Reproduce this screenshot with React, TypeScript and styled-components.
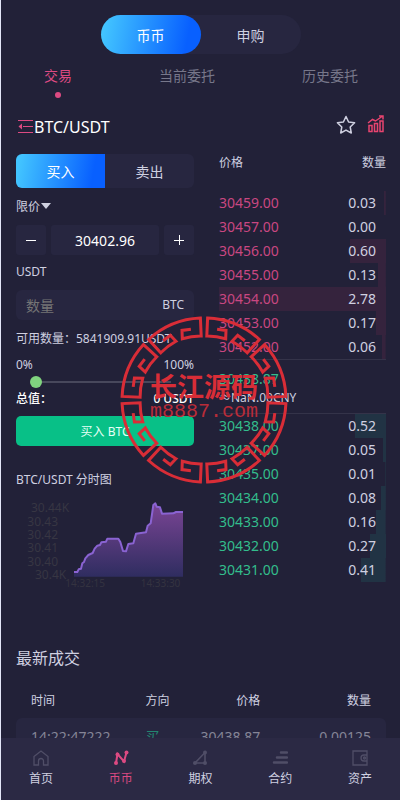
import React, { useState } from "react";
import styled, { createGlobalStyle, css } from "styled-components";

const GlobalStyle = createGlobalStyle`
  * { box-sizing: border-box; }
  body { margin: 0; background: #222138; }
  body, button, input {
    font-family: "Noto Sans", "Noto Sans CJK SC", sans-serif;
  }
  button { border: 0; padding: 0; background: none; color: inherit; cursor: pointer; }
`;

const blue = "linear-gradient(100deg, #42c4ff 5%, #0860ff 85%)";
const pink = "#dc4a82";
const green = "#33bd8c";
const panel = "#272640";
const text = "#cfd0e0";

const Page = styled.div`
  position: relative;
  display: flex;
  flex-direction: column;
  height: 100vh;
  border-left: 1px solid #e4e6f8;
  color: ${text};
  font-size: 12px;
  line-height: 18px;
`;

const Main = styled.main`
  flex: 1;
  min-height: 0;
  overflow-y: auto;
  scrollbar-width: none;
`;

const ModeSwitch = styled.div`
  display: flex;
  width: 200px;
  height: 39px;
  margin: 15px auto 0;
  border-radius: 20px;
  background: ${panel};
`;

const ModeButton = styled.button<{ $active?: boolean }>`
  flex: 1;
  border-radius: 20px;
  font-size: 14px;
  ${(p) => p.$active && css`background: ${blue}; color: #fff;`}
`;

const Tabs = styled.nav`
  display: flex;
  justify-content: space-between;
  padding: 11px 42px 0 43px;
`;

const Tab = styled.button<{ $active?: boolean }>`
  display: flex;
  flex-direction: column;
  align-items: center;
  gap: 5px;
  height: 34px;
  font-size: 14px;
  line-height: 22px;
  color: ${(p) => (p.$active ? pink : "#77778a")};
  &::after {
    content: "";
    width: 6px;
    height: 6px;
    border-radius: 50%;
    background: ${(p) => (p.$active ? pink : "transparent")};
  }
`;

const PairBar = styled.header`
  display: flex;
  align-items: center;
  height: 28px;
  margin-top: 14px;
  padding: 0 15px 0 16px;
`;

const PairName = styled.h1`
  flex: 1;
  margin: 0;
  font-size: 16px;
  font-weight: 400;
  line-height: 24px;
  color: #fff;
`;

const PairActions = styled.div`
  display: flex;
  gap: 11px;
  margin-bottom: 4px;
`;

const IconButton = styled.button`
  display: flex;
`;

const Columns = styled.div`
  display: grid;
  grid-template-columns: 178fr 167fr;
  column-gap: 25px;
  padding: 13px 14px 0 15px;
`;

const Form = styled.form`
  display: flex;
  flex-direction: column;
  min-width: 0;
`;

const SideSwitch = styled.div`
  display: flex;
  height: 34px;
  border-radius: 6px;
  overflow: hidden;
  background: ${panel};
`;

const SideButton = styled.button<{ $active?: boolean }>`
  flex: 1;
  font-size: 14px;
  ${(p) => p.$active && css`background: ${blue}; color: #fff;`}
`;

const OrderType = styled.button`
  display: flex;
  align-items: center;
  gap: 1px;
  height: 18px;
  margin: 9px 0 10px;
  font-size: 12px;
`;

const Stepper = styled.div`
  display: grid;
  grid-template-columns: 30px 1fr 30px;
  gap: 5px;
  height: 30px;
`;

const StepButton = styled.button`
  display: flex;
  align-items: center;
  justify-content: center;
  border-radius: 3px;
  background: ${panel};
  color: #fff;
`;

const PriceInput = styled.input`
  min-width: 0;
  border: 0;
  border-radius: 3px;
  background: ${panel};
  color: #fff;
  font-size: 14px;
  text-align: center;
`;

const Currency = styled.div`
  margin: 8px 0 9px;
`;

const AmountField = styled.label`
  display: flex;
  align-items: center;
  height: 30px;
  padding: 0 10px;
  border-radius: 6px;
  background: ${panel};
`;

const AmountInput = styled.input`
  flex: 1;
  min-width: 0;
  padding: 0;
  border: 0;
  background: none;
  color: #fff;
  font-size: 14px;
  &::placeholder { color: #757575; }
`;

const Line = styled.div<{ $strong?: boolean }>`
  display: flex;
  justify-content: space-between;
  white-space: nowrap;
  ${(p) => p.$strong && css`color: #fff; font-weight: 500;`}
`;

const Available = styled(Line)`
  margin: 10px 0 8px;
`;

const Slider = styled.input`
  appearance: none;
  height: 12px;
  margin: 2px 20px 2px 14px;
  background: linear-gradient(#48485c, #48485c) center / calc(100% - 6px) 2px no-repeat;
  &::-webkit-slider-thumb {
    appearance: none;
    width: 12px;
    height: 12px;
    border-radius: 50%;
    background: #80d37f;
  }
`;

const Submit = styled.button`
  height: 30px;
  margin-top: 8px;
  border-radius: 5px;
  background: #08c087;
  color: #e6fff6;
  font-size: 12px;
`;

const ChartTitle = styled.h2`
  margin: 25px 0 6px;
  font-size: 12px;
  font-weight: 400;
  line-height: 18px;
`;

const Chart = styled.svg`
  display: block;
  width: 100%;
  aspect-ratio: 178 / 100;
`;

const Book = styled.section`
  min-width: 0;
`;

const BookHead = styled.div`
  display: flex;
  justify-content: space-between;
  height: 37px;
`;

const BookList = styled.div<{ $side: "ask" | "bid" }>`
  color: ${(p) => (p.$side === "ask" ? "#c94781" : green)};
  ${(p) => (p.$side === "ask" ? "border-bottom" : "border-top")}: 1px solid #343349;
  --depth: ${(p) => (p.$side === "ask" ? "#35233d" : "#213344")};
`;

const BookRow = styled.div`
  display: flex;
  justify-content: space-between;
  padding: 0 10px 0 0;
  font-size: 14px;
  line-height: 24px;
  background-image: linear-gradient(var(--depth), var(--depth));
  background-position: right;
  background-repeat: no-repeat;
`;

const Quantity = styled.span`
  color: ${text};
`;

const LastPrice = styled.div`
  padding: 9px 0 6px;
  line-height: 18px;
`;

const LastValue = styled.div`
  color: ${green};
  font-size: 14px;
  line-height: 20px;
`;

const Latest = styled.section`
  padding: 51px 14px 0 15px;
`;

const LatestTitle = styled.h2`
  margin: 0 0 13px;
  font-size: 16px;
  font-weight: 400;
  line-height: 24px;
`;

const Trades = styled.table`
  width: 100%;
  border-collapse: collapse;
  table-layout: fixed;
  tbody { background: ${panel}; }
`;

const Cell = styled.td<{ $width: number; $right?: boolean; $buy?: boolean }>`
  width: ${(p) => p.$width}%;
  padding: 0;
  height: 38px;
  font-size: 14px;
  color: ${(p) => (p.$buy ? "#238671" : "#858597")};
  text-align: ${(p) => (p.$right ? "right" : "left")};
  &:first-child { padding-left: 15px; border-radius: 6px 0 0 6px; }
  &:last-child { padding-right: 15px; border-radius: 0 6px 6px 0; }
`;

const HeadCell = styled(Cell)`
  height: 35px;
  font-size: 12px;
  font-weight: 400;
  color: ${text};
`;

const BottomNav = styled.nav`
  display: flex;
  height: 62px;
  padding-top: 12px;
  background: #2b2944;
`;

const NavLink = styled.a<{ $active?: boolean }>`
  flex: 1;
  display: flex;
  flex-direction: column;
  align-items: center;
  gap: 4px;
  color: ${(p) => (p.$active ? pink : text)};
  text-decoration: none;
  svg { color: ${(p) => (p.$active ? pink : "#504e67")}; }
`;

const Stamp = styled.div`
  position: absolute;
  left: 203px;
  top: 400px;
  width: 168px;
  height: 168px;
  transform: translate(-50%, -50%);
  display: flex;
  flex-direction: column;
  align-items: center;
  justify-content: center;
  padding-bottom: 2px;
  color: #d92d37;
  pointer-events: none;
  svg { position: absolute; inset: 0; }
`;

const StampName = styled.strong`
  font-size: 27px;
  font-weight: 700;
  line-height: 26px;
  white-space: nowrap;
`;

const StampSite = styled.span`
  font-family: "Liberation Mono", monospace;
  font-size: 20px;
  line-height: 24px;
  color: #b92c39;
`;

const asks: [string, string][] = [
  ["30459.00", "0.03"], ["30457.00", "0.00"], ["30456.00", "0.60"], ["30455.00", "0.13"],
  ["30454.00", "2.78"], ["30453.00", "0.17"], ["30452.00", "0.06"],
];
const bids: [string, string][] = [
  ["30438.00", "0.52"], ["30437.00", "0.05"], ["30435.00", "0.01"], ["30434.00", "0.08"],
  ["30433.00", "0.16"], ["30432.00", "0.27"], ["30431.00", "0.41"],
];
const deepest = 2.78;

function Orders({ side, rows }: { side: "ask" | "bid"; rows: [string, string][] }) {
  return (
    <BookList $side={side}>
      {rows.map(([price, qty]) => (
        <BookRow key={price} style={{ backgroundSize: `${(Number(qty) / deepest) * 100}% 100%` }}>
          <span>{price}</span>
          <Quantity>{qty}</Quantity>
        </BookRow>
      ))}
    </BookList>
  );
}

const curve =
  "222,336 232,336 236,328 243,326 247,310 252,306 256,295 265,285 278,279 284,266 292,257 300,255 304,247 318,245 322,236 355,236 361,246 369,273 378,274 385,252 400,250 408,221 438,217 443,197 452,190 460,135 466,130 470,140 480,142 486,161 520,160 528,156 549,156";

const priceTicks: [number, number, string][] = [
  [93, 156, "30.44K"], [82, 197, "30.43"], [82, 236, "30.42"], [82, 275, "30.41"],
  [82, 317, "30.40"], [105, 357, "30.4K"],
];

function PriceChart() {
  return (
    <Chart viewBox="48 105 534 300" role="img" aria-label="BTC/USDT 分时图">
      <defs>
        <linearGradient id="area" x1="0" y1="0" x2="0" y2="1">
          <stop offset="0" stopColor="#7b4595" />
          <stop offset="1" stopColor="#2f2d60" />
        </linearGradient>
      </defs>
      <g fill="#373643" fontSize="36">
        {priceTicks.map(([x, y, label]) => <text key={label} x={x} y={y}>{label}</text>)}
      </g>
      <g fill="#343340" fontSize="30">
        <text x="196" y="382">14:32:15</text>
        <text x="422" y="382">14:33:30</text>
      </g>
      <polygon points={`222,350 ${curve} 549,350`} fill="url(#area)" />
      <polyline points={curve} fill="none" stroke="#8a63d2" strokeWidth="6" strokeLinejoin="round" />
    </Chart>
  );
}

const RADIUS = 82;
function polar(r: number, deg: number) {
  const a = (deg * Math.PI) / 180;
  return `${(84 + r * Math.cos(a)).toFixed(1)} ${(84 - r * Math.sin(a)).toFixed(1)}`;
}

// One eighth of the meander ring: an outer arc whose two ends curl inwards.
function meander(start: number) {
  const a = start + 2.5;
  const b = start + 42.5;
  return [
    `M${polar(72, a + 8)} L${polar(73, a + 15)} L${polar(65, a + 17)}`,
    `A65 65 0 0 1 ${polar(64, a)} L${polar(RADIUS, a)}`,
    `A${RADIUS} ${RADIUS} 0 0 0 ${polar(RADIUS, b)} L${polar(64, b)}`,
    `A65 65 0 0 1 ${polar(65, b - 17)} L${polar(73, b - 15)} L${polar(72, b - 8)}`,
  ].join(" ");
}

function MeanderRing() {
  return (
    <svg viewBox="0 0 168 168" fill="none" stroke="currentColor" strokeWidth="3" aria-hidden="true">
      {Array.from({ length: 8 }, (_, i) => <path key={i} d={meander(i * 45)} />)}
    </svg>
  );
}

const navIcons = {
  home: <path d="M1 6.500 8 1l7 5.500V15h-4.500v-4a2.500 2.500 0 0 0-5 0v4H1z" fill="none" stroke="currentColor" strokeWidth="1.300" />,
  spot: (
    <g fill="currentColor">
      <path d="M3 13 4.500 4 11 11.500 13.500 2.500" fill="none" stroke="currentColor" strokeWidth="2" />
      <circle cx="3" cy="13" r="2" /><circle cx="4.500" cy="4.500" r="2" />
      <circle cx="11" cy="11" r="2" /><circle cx="13.500" cy="2.500" r="2" />
    </g>
  ),
  option: (
    <g fill="currentColor">
      <path d="M3 13 13 2.500V13z" fill="none" stroke="currentColor" strokeWidth="1.600" />
      <circle cx="3" cy="13" r="2" /><circle cx="13" cy="2.500" r="2" /><circle cx="13" cy="13" r="2" />
    </g>
  ),
  contract: <path d="M9 2.500h6M5 7.500h10M2 12.500h13" fill="none" stroke="currentColor" strokeWidth="2.500" strokeLinecap="round" />,
  wallet: (
    <g fill="none" stroke="currentColor" strokeWidth="1.300">
      <path d="M1 1h14v14H1zM15 5h-3a3 3 0 0 0 0 6h3" /><circle cx="12.500" cy="8" r="1" />
    </g>
  ),
};

const navItems: [keyof typeof navIcons, string][] = [
  ["home", "首页"], ["spot", "币币"], ["option", "期权"], ["contract", "合约"], ["wallet", "资产"],
];

export default function App() {
  const [price, setPrice] = useState("30402.96");
  const [amount, setAmount] = useState("");
  const [percent, setPercent] = useState(0);
  const step = (by: number) => setPrice((Number(price) + by).toFixed(2));

  return (
    <Page>
      <GlobalStyle />
      <Main>
        <ModeSwitch>
          <ModeButton $active>币币</ModeButton>
          <ModeButton>申购</ModeButton>
        </ModeSwitch>
        <Tabs>
          <Tab $active>交易</Tab>
          <Tab>当前委托</Tab>
          <Tab>历史委托</Tab>
        </Tabs>
        <PairBar>
          <IconButton aria-label="选择交易对">
            <svg width="17" height="16" viewBox="0 0 17 16" fill="none" stroke={pink} strokeWidth="1">
              <path d="M1 1.500h15M6 7.500h10M1 13.500h15" />
              <path d="M5 4.500v6L1.500 7.500z" fill={pink} stroke="none" />
            </svg>
          </IconButton>
          <PairName>BTC/USDT</PairName>
          <PairActions>
            <IconButton aria-label="收藏">
              <svg width="20" height="20" viewBox="0 0 20 20" fill="none" stroke={text} strokeWidth="1.500" strokeLinejoin="round">
                <path d="m10 1.500 2.600 5.500 6 .8-4.400 4.200 1.100 6-5.300-2.900-5.300 2.900 1.100-6-4.400-4.200 6-.8z" />
              </svg>
            </IconButton>
            <IconButton aria-label="行情图">
              <svg width="18" height="18" viewBox="0 0 18 18" fill="none" stroke="#e8446f" strokeWidth="1.500">
                <path d="M2 10.500h3V16.500H2zM7.500 8.500h3v8h-3zM13 6h3v10.500h-3zM1 8l4.500-3.500 3 1.500L15 1.500M12 1h4v3.500" />
              </svg>
            </IconButton>
          </PairActions>
        </PairBar>

        <Columns>
          <Form onSubmit={(e) => e.preventDefault()}>
            <SideSwitch>
              <SideButton type="button" $active>买入</SideButton>
              <SideButton type="button">卖出</SideButton>
            </SideSwitch>
            <OrderType type="button">
              限价
              <svg width="10" height="6" viewBox="0 0 10 6" aria-hidden="true"><path d="M0 0h10L5 6z" fill={text} /></svg>
            </OrderType>
            <Stepper>
              <StepButton type="button" aria-label="减少" onClick={() => step(-1)}>
                <svg width="10" height="10" stroke="currentColor"><path d="M0 5.500h10" /></svg>
              </StepButton>
              <PriceInput aria-label="价格" value={price} onChange={(e) => setPrice(e.target.value)} />
              <StepButton type="button" aria-label="增加" onClick={() => step(1)}>
                <svg width="10" height="10" stroke="currentColor"><path d="M0 5.500h10M5.500 0v10" /></svg>
              </StepButton>
            </Stepper>
            <Currency>USDT</Currency>
            <AmountField>
              <AmountInput aria-label="数量" placeholder="数量" value={amount} onChange={(e) => setAmount(e.target.value)} />
              BTC
            </AmountField>
            <Available>可用数量：5841909.91USDT</Available>
            <Line><span>0%</span><span>100%</span></Line>
            <Slider type="range" aria-label="百分比" value={percent} onChange={(e) => setPercent(Number(e.target.value))} />
            <Line $strong><span>总值：</span><span>0 USDT</span></Line>
            <Submit type="submit">买入 BTC</Submit>
            <ChartTitle>BTC/USDT 分时图</ChartTitle>
            <PriceChart />
          </Form>

          <Book>
            <BookHead><span>价格</span><span>数量</span></BookHead>
            <Orders side="ask" rows={asks} />
            <LastPrice>
              <LastValue>30438.87</LastValue>
              ≈NaN.00CNY
            </LastPrice>
            <Orders side="bid" rows={bids} />
          </Book>
        </Columns>

        <Latest>
          <LatestTitle>最新成交</LatestTitle>
          <Trades>
            <thead>
              <tr>
                <HeadCell as="th" $width={35}>时间</HeadCell>
                <HeadCell as="th" $width={12}>方向</HeadCell>
                <HeadCell as="th" $width={19} $right>价格</HeadCell>
                <HeadCell as="th" $width={34} $right>数量</HeadCell>
              </tr>
            </thead>
            <tbody>
              <tr>
                <Cell $width={35}>14:22:47222</Cell>
                <Cell $width={12} $buy>买</Cell>
                <Cell $width={19} $right>30438.87</Cell>
                <Cell $width={34} $right>0.00125</Cell>
              </tr>
            </tbody>
          </Trades>
        </Latest>
      </Main>

      <BottomNav>
        {navItems.map(([icon, label]) => (
          <NavLink key={icon} href={`#${icon}`} $active={icon === "spot"}>
            <svg width="16" height="16" viewBox="0 0 16 16" aria-hidden="true">{navIcons[icon]}</svg>
            {label}
          </NavLink>
        ))}
      </BottomNav>

      <Stamp>
        <MeanderRing />
        <StampName>长江源码</StampName>
        <StampSite>m8887.com</StampSite>
      </Stamp>
    </Page>
  );
}
